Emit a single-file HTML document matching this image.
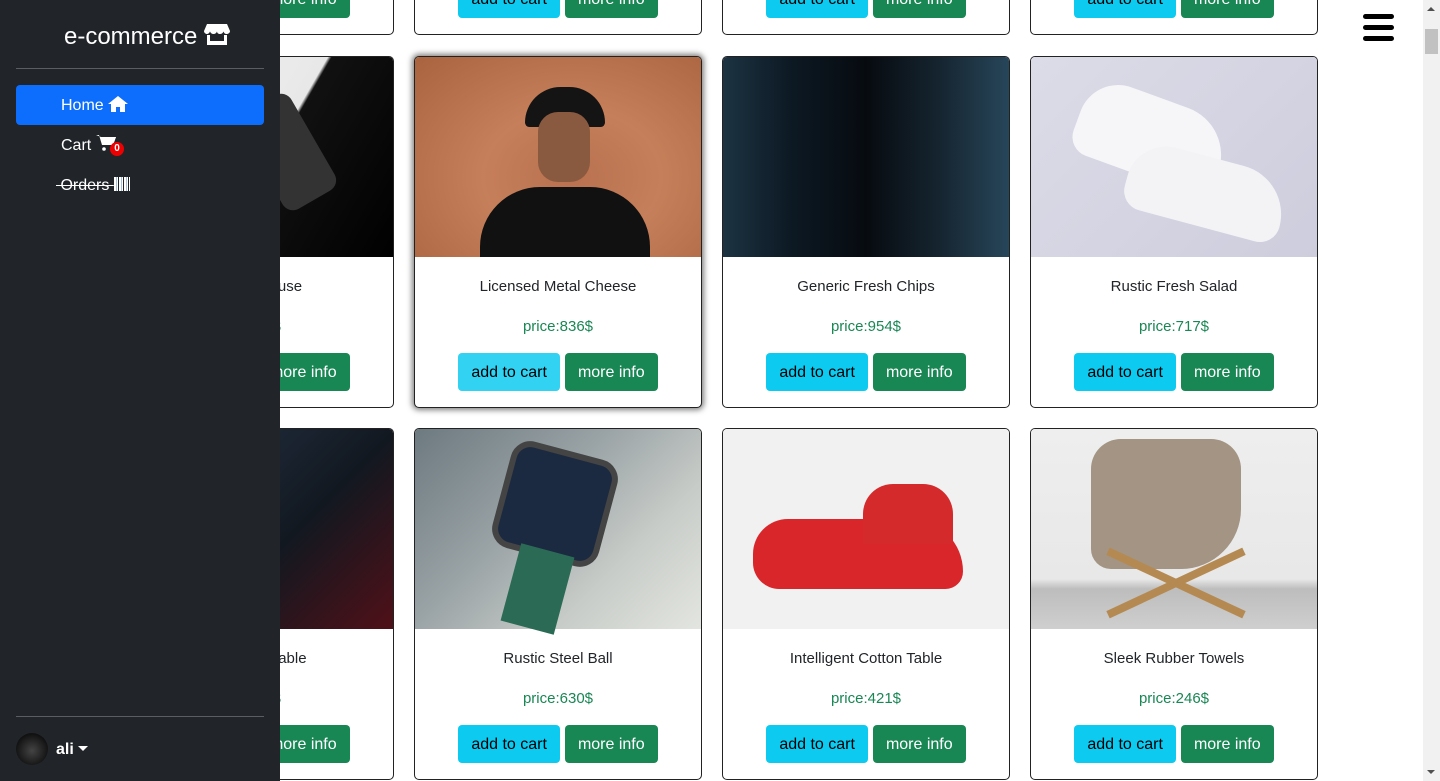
<!DOCTYPE html>
<html><head><meta charset="utf-8"><style>
*{box-sizing:border-box;margin:0;padding:0}
body{width:1440px;height:781px;overflow:hidden;background:#fff;font-family:"Liberation Sans","DejaVu Sans",sans-serif;position:relative}
.card{position:absolute;width:288px;height:352px;border:1px solid #222;border-radius:5px;background:#fff;overflow:hidden}
.card .img{height:200px;width:100%;position:relative}
.card .t{position:absolute;top:221px;left:0;right:0;text-align:center;font-size:15px;color:#212529}
.card .p{position:absolute;top:261px;left:0;right:0;text-align:center;font-size:15px;color:#198754}
.card .b{position:absolute;top:296px;left:0;right:0;display:flex;justify-content:center;gap:5px}
.btn{height:38px;padding:0 13px;border-radius:4px;font-size:16px;line-height:40px}
.c{background:#0dcaf0;color:#000}
.g{background:#198754;color:#fff}
.sb{position:absolute;left:0;top:0;width:280px;height:781px;background:#212529;color:#fff}
.hl{position:absolute;left:16px;width:248px;height:1px;background:#5a5d61}
.nav{position:absolute;left:16px;width:248px;height:40px;border-radius:4px;font-size:16px;line-height:42px;padding-left:45px}
.bar{position:absolute;left:1363px;width:31px;height:5px;border-radius:3px;background:#000}
</style></head><body>

<!-- row 1 (mostly off-screen) -->
<div class="card" style="left:106px;top:-317px"><div class="b"><span class="btn c">add to cart</span><span class="btn g">more info</span></div></div>
<div class="card" style="left:414px;top:-317px"><div class="b"><span class="btn c">add to cart</span><span class="btn g">more info</span></div></div>
<div class="card" style="left:722px;top:-317px"><div class="b"><span class="btn c">add to cart</span><span class="btn g">more info</span></div></div>
<div class="card" style="left:1030px;top:-317px"><div class="b"><span class="btn c">add to cart</span><span class="btn g">more info</span></div></div>

<!-- row 2 -->
<div class="card" style="left:106px;top:56px"><div class="img" style="background:linear-gradient(120deg,#f4f4f4 0%,#e8e8e8 55%,#111 56%,#000 100%)"><div style="position:absolute;left:150px;top:40px;width:60px;height:110px;background:#333;border-radius:12px;transform:rotate(-30deg)"></div></div><div class="t">Ultimate Mouse</div><div class="p">price:??$</div><div class="b"><span class="btn c">add to cart</span><span class="btn g">more info</span></div></div>
<div class="card" style="left:414px;top:56px;box-shadow:0 0 6px 2px rgba(0,0,0,.5)"><div class="img" style="background:radial-gradient(ellipse at 55% 60%,#b9714f 0%,#c57f5a 40%,#a9633f 100%)"><div style="position:absolute;left:110px;top:30px;width:80px;height:40px;background:#141414;border-radius:40px 40px 5px 5px"></div><div style="position:absolute;left:123px;top:55px;width:52px;height:70px;background:#8a5a40;border-radius:20px"></div><div style="position:absolute;left:65px;top:130px;width:170px;height:70px;background:#111;border-radius:60px 60px 0 0"></div></div><div class="t">Licensed Metal Cheese</div><div class="p">price:836$</div><div class="b"><span class="btn c" style="background:#31d2f2">add to cart</span><span class="btn g">more info</span></div></div>
<div class="card" style="left:722px;top:56px"><div class="img" style="background:linear-gradient(90deg,#1c3342 0%,#0c1822 25%,#070b10 50%,#15242f 75%,#27465a 100%)"></div><div class="t">Generic Fresh Chips</div><div class="p">price:954$</div><div class="b"><span class="btn c">add to cart</span><span class="btn g">more info</span></div></div>
<div class="card" style="left:1030px;top:56px"><div class="img" style="background:linear-gradient(135deg,#dcdce8,#cdcddd)"><div style="position:absolute;left:45px;top:40px;width:150px;height:80px;background:#f6f6f8;border-radius:40px 50px 20px 20px;transform:rotate(20deg)"></div><div style="position:absolute;left:95px;top:100px;width:160px;height:70px;background:#f3f3f6;border-radius:40px 50px 20px 20px;transform:rotate(15deg)"></div></div><div class="t">Rustic Fresh Salad</div><div class="p">price:717$</div><div class="b"><span class="btn c">add to cart</span><span class="btn g">more info</span></div></div>

<!-- row 3 -->
<div class="card" style="left:106px;top:428px"><div class="img" style="background:linear-gradient(135deg,#2a3a50,#121820 60%,#501018)"></div><div class="t">Handmade Table</div><div class="p">price:??$</div><div class="b"><span class="btn c">add to cart</span><span class="btn g">more info</span></div></div>
<div class="card" style="left:414px;top:428px"><div class="img" style="background:linear-gradient(135deg,#6d7a80 0%,#9aa3a6 40%,#c8ccc8 70%,#e3e6e0 100%)"><div style="position:absolute;left:85px;top:20px;width:110px;height:110px;background:#1b2a40;border:6px solid #444;border-radius:20px;transform:rotate(15deg)"></div><div style="position:absolute;left:95px;top:120px;width:55px;height:80px;background:#2b6b56;transform:rotate(15deg)"></div></div><div class="t">Rustic Steel Ball</div><div class="p">price:630$</div><div class="b"><span class="btn c">add to cart</span><span class="btn g">more info</span></div></div>
<div class="card" style="left:722px;top:428px"><div class="img" style="background:#f1f1f1"><div style="position:absolute;left:30px;top:90px;width:210px;height:70px;background:#d9262a;border-radius:40px 60px 20px 30px"></div><div style="position:absolute;left:140px;top:55px;width:90px;height:60px;background:#d42a2c;border-radius:30px 30px 0 0"></div></div><div class="t">Intelligent Cotton Table</div><div class="p">price:421$</div><div class="b"><span class="btn c">add to cart</span><span class="btn g">more info</span></div></div>
<div class="card" style="left:1030px;top:428px"><div class="img" style="background:linear-gradient(180deg,#eeeeee 0%,#e8e8e8 75%,#bdbdbd 80%,#cfcfcf 100%)"><div style="position:absolute;left:60px;top:10px;width:150px;height:130px;background:#a39483;border-radius:30px 30px 60px 20px"></div><div style="position:absolute;left:70px;top:150px;width:150px;height:8px;background:#b58a52;transform:rotate(-25deg)"></div><div style="position:absolute;left:70px;top:150px;width:150px;height:8px;background:#b58a52;transform:rotate(25deg)"></div></div><div class="t">Sleek Rubber Towels</div><div class="p">price:246$</div><div class="b"><span class="btn c">add to cart</span><span class="btn g">more info</span></div></div>

<!-- sidebar -->
<div class="sb">
 <div style="position:absolute;top:22px;left:0;width:294px;text-align:center;font-size:24px">e-commerce <svg width="26" height="24" viewBox="0 0 26 24" style="vertical-align:-2px"><path d="M3 2h20l3 7c0 2-2 3-3.5 3S20 11 19.5 9.5C19 11 17.5 12 16 12s-3-1-3-2.5C12.5 11 11 12 9.5 12S6.5 11 6 9.5C5.5 11 4 12 3 12S0 11 0 9z" fill="#fff"/><path d="M3 13h3v6h14v-6h3v10H3z" fill="#fff"/></svg></div>
 <div class="hl" style="top:68px"></div>
 <div class="nav" style="top:85px;background:#0d6efd">Home <svg width="20" height="16" viewBox="0 0 20 16" style="vertical-align:-2px"><path d="M10 0L0 8h3v8h5v-5h4v5h5V8h3z" fill="#fff"/></svg></div>
 <div class="nav" style="top:125px">Cart <svg width="20" height="17" viewBox="0 0 20 17" style="vertical-align:-1px"><path d="M0 1h3l3 10h11l3-8H5" fill="#fff"/><path d="M4 3h16l-3 8H7z" fill="#fff"/><circle cx="8" cy="15" r="1.8" fill="#fff"/><circle cx="16" cy="15" r="1.8" fill="#fff"/></svg><span style="position:absolute;left:94px;top:17px;width:14px;height:14px;border-radius:7px;background:#e00;font-size:10px;line-height:14px;text-align:center;font-weight:bold">0</span></div>
 <div class="nav" style="top:165px"><span style="text-decoration:line-through;margin-left:-5px">&nbsp;Orders&nbsp;</span><span style="display:inline-block;width:16px;height:14px;vertical-align:-1px;background:repeating-linear-gradient(90deg,#fff 0 2px,#a8c0e0 2px 3px,#fff 3px 4px,#212529 4px 5px)"></span></div>
 <div class="hl" style="top:716px"></div>
 <div style="position:absolute;left:16px;top:733px;width:32px;height:32px;border-radius:16px;background:radial-gradient(circle at 50% 55%,#444,#111 70%)"></div>
 <div style="position:absolute;left:56px;top:741px;font-size:16px;font-weight:bold">ali <span style="display:inline-block;border-left:5px solid transparent;border-right:5px solid transparent;border-top:5px solid #fff;vertical-align:3px"></span></div>
</div>

<!-- hamburger -->
<div class="bar" style="top:14px"></div>
<div class="bar" style="top:25px"></div>
<div class="bar" style="top:36px"></div>

<!-- scrollbar -->
<div style="position:absolute;left:1423px;top:0;width:17px;height:781px;background:#f1f1f1"></div>
<div style="position:absolute;left:1425px;top:29px;width:13px;height:25px;background:#c1c1c1"></div>
<div style="position:absolute;left:1427px;top:7px;border-left:4px solid transparent;border-right:4px solid transparent;border-bottom:4px solid #505050"></div>
<div style="position:absolute;left:1427px;top:770px;border-left:4px solid transparent;border-right:4px solid transparent;border-top:4px solid #505050"></div>
</body></html>
